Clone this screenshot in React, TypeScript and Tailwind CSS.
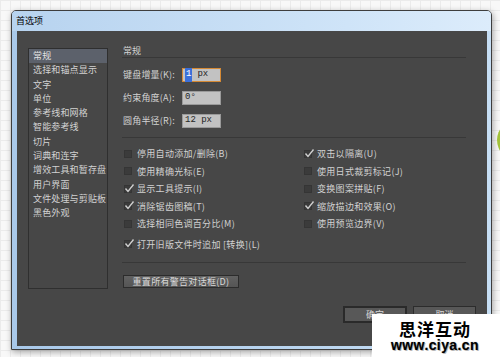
import React from 'react';

const sections = [
  '常规',
  '选择和锚点显示',
  '文字',
  '单位',
  '参考线和网格',
  '智能参考线',
  '切片',
  '词典和连字',
  '增效工具和暂存盘',
  '用户界面',
  '文件处理与剪贴板',
  '黑色外观',
];

const leftChecks = [
  { label: '停用自动添加/删除(B)', on: false },
  { label: '使用精确光标(E)', on: false },
  { label: '显示工具提示(I)', on: true },
  { label: '消除锯齿图稿(T)', on: true },
  { label: '选择相同色调百分比(M)', on: false },
];

const rightChecks = [
  { label: '双击以隔离(U)', on: true },
  { label: '使用日式裁剪标记(J)', on: false },
  { label: '变换图案拼贴(F)', on: false },
  { label: '缩放描边和效果(O)', on: true },
  { label: '使用预览边界(V)', on: false },
];

function Check({ label, on }: { label: string; on: boolean }) {
  return (
    <div className="flex items-center gap-[5px] h-[17.5px]">
      <span className="relative w-[8px] h-[8px] bg-[#3b3b3b] border border-[#353535] shrink-0">
        {on && (
          <svg className="absolute -left-[1px] -top-[3px]" width="11" height="11" viewBox="0 0 11 11">
            <polyline points="1.5,5.5 4,8.5 9.5,1.5" fill="none" stroke="#cfcfcf" strokeWidth="1.4" />
          </svg>
        )}
      </span>
      <span className="tracking-[0.3px]">{label}</span>
    </div>
  );
}

function Field({ label, children, focused }: { label: string; children: React.ReactNode; focused?: boolean }) {
  return (
    <div className="flex items-center h-[14px]">
      <span className="w-[59px] tracking-[0.2px]">{label}</span>
      <div
        className={`w-[39px] h-[14px] flex items-center px-[2px] bg-[#c2c2c2] text-[#262626] font-['Liberation_Mono','Noto_Sans_CJK_SC',monospace] ${
          focused ? 'border-[1.5px] border-[#d68a35]' : 'border border-[#9a9a9a]'
        }`}
      >
        {children}
      </div>
    </div>
  );
}

export default function App() {
  return (
    <div className="relative w-[500px] h-[357px] overflow-hidden bg-[#f8f8f8] bg-[linear-gradient(to_right,#ebebeb_1px,transparent_1px),linear-gradient(to_bottom,#ebebeb_1px,transparent_1px)] bg-[size:10px_10px] pt-[10px] pl-[11px] font-['Noto_Sans_CJK_SC',sans-serif] text-[9px]">
      {/* decorative circle at the page edge */}
      <div className="absolute left-[497px] top-[120px] w-[40px] h-[40px] rounded-full bg-[#a3c23a]" />

      {/* dialog window */}
      <div className="w-[481px] h-[340px] flex flex-col rounded-t-[5px] border border-[#3e3e3e] bg-[linear-gradient(to_right,#a9c9ea,#c6def4)] shadow-[1px_2px_6px_rgba(0,0,0,0.35)]">
        <div className="h-[20px] flex items-center pl-[4px] text-black bg-[linear-gradient(to_right,#b7d3ef,#cfe4f8_70%,#dcecfb)] rounded-t-[4px]">
          首选项
        </div>

        <div className="flex-1 ml-[5px] mr-[4px] mb-[3px] bg-[#474747] text-[#d2d2d2] flex flex-col">
          <div className="flex">
            {/* section list */}
            <div className="ml-[11px] mt-[17px] w-[80px] h-[241px] border border-[#2f2f2f] flex flex-col">
              {sections.map((s, i) => (
                <div
                  key={s}
                  className={`h-[14.3px] leading-[14.3px] pl-[4px] whitespace-nowrap tracking-[0.15px] ${i === 0 ? 'bg-[#5c616b] text-[#e2e2e2]' : ''}`}
                >
                  {s}
                </div>
              ))}
            </div>

            {/* settings panel */}
            <div className="ml-[14px] w-[344px] pt-[14px] flex flex-col">
              <div className="h-[12px] leading-[12px] pl-[1px]">常规</div>
              <div className="h-px bg-[#383838]" />

              <div className="mt-[10px] pl-[1px] flex flex-col gap-[9px]">
                <Field label="键盘增量(K):" focused>
                  <span className="bg-[#3b6fd9] text-white px-[1px]">1</span>
                  <span className="ml-[5px]">px</span>
                </Field>
                <Field label="约束角度(A):">
                  <span>0°</span>
                </Field>
                <Field label="圆角半径(R):">
                  <span>12 px</span>
                </Field>
              </div>

              <div className="mt-[9px] h-px bg-[#383838]" />

              <div className="mt-[7px] pl-[2px] grid grid-cols-[180px_1fr]">
                <div className="flex flex-col">
                  {leftChecks.map((c) => (
                    <Check key={c.label} {...c} />
                  ))}
                </div>
                <div className="flex flex-col">
                  {rightChecks.map((c) => (
                    <Check key={c.label} {...c} />
                  ))}
                </div>
              </div>
              <div className="mt-[3px] pl-[2px]">
                <Check label="打开旧版文件时追加 [转换](L)" on />
              </div>

              <div className="mt-[9px] h-px bg-[#383838]" />

              <button className="mt-[12px] ml-[1px] w-[116px] h-[13px] flex items-center justify-center border border-[#2c2c2c] bg-[linear-gradient(to_bottom,#616161,#555555)] text-[#dadada] leading-none tracking-[0.3px]">
                重置所有警告对话框(D)
              </button>
            </div>
          </div>

          <div className="mt-auto mb-[23px] mr-[11px] flex justify-end gap-[6px]">
            <button className="w-[64px] h-[17px] border-2 border-[#2a2a2a] bg-[#585858] text-[#d8d8d8]">确定</button>
            <button className="w-[63px] h-[17px] border border-[#2c2c2c] bg-[#585858] text-[#d8d8d8]">取消</button>
          </div>
        </div>
      </div>

      {/* watermark */}
      <div className="absolute left-[372px] top-[314px] w-[128px] h-[43px] bg-white flex flex-col items-center justify-center pr-[2px]">
        <div className="text-[17px] leading-[19px] font-bold text-black tracking-[1px]">思洋互动</div>
        <div className="text-[14px] leading-[15px] font-bold text-black font-['Liberation_Sans',sans-serif] tracking-[0.4px] [text-shadow:0_0_1px_#888,1px_1px_0_#bbb]">
          www.ciya.cn
        </div>
      </div>
    </div>
  );
}
